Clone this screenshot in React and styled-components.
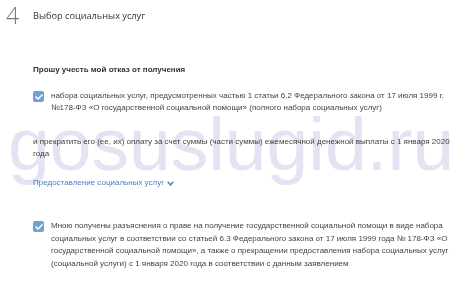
import React from 'react'
import styled, { createGlobalStyle } from 'styled-components'

const Global = createGlobalStyle`
  body {
    margin: 0;
    background: #fff;
    font-family: "Liberation Sans", Arial, sans-serif;
  }
`

const Page = styled.div`
  position: relative;
  width: 474px;
  height: 282px;
  overflow: hidden;
  background: #fff;
`

const Header = styled.div`
  display: flex;
  align-items: center;
  padding: 3px 0 0 6px;
  height: 24px;
`

const StepNumber = styled.span`
  width: 27px;
  font-family: "Open Sans", "Liberation Sans", sans-serif;
  font-weight: 300;
  font-size: 23px;
  line-height: 24px;
  color: #7a7a7a;
`

const Title = styled.h2`
  margin: 0;
  font-family: "Open Sans", "Liberation Sans", sans-serif;
  font-weight: 400;
  font-size: 9.2px;
  color: #333;
  line-height: 12px;
  padding-top: 2px;
`

const Body = styled.div`
  padding: 0 16px 0 33px;
  color: #444;
  font-size: 8px;
  line-height: 12px;
`

const Lead = styled.p`
  margin: 37px 0 0;
  font-weight: 700;
  color: #333;
`

const CheckRow = styled.div`
  display: flex;
  align-items: flex-start;
  margin-top: ${p => p.$gap}px;
  line-height: ${p => p.$lh || 12}px;
`

const Box = styled.span`
  flex: none;
  width: 11px;
  height: 11px;
  margin: 1px 7px 0 0;
  border-radius: 2px;
  background: #6fa2d0;
  display: flex;
  align-items: center;
  justify-content: center;
`

const Paragraph = styled.p`
  margin: ${p => p.$gap}px 0 0;
`

const Link = styled.a`
  display: inline-flex;
  align-items: center;
  gap: 3px;
  margin-top: 17px;
  color: #4a80bf;
  text-decoration: none;
`

const Watermark = styled.div`
  position: absolute;
  left: 8px;
  top: 107px;
  font-family: "Liberation Sans", Arial, sans-serif;
  font-size: 75px;
  line-height: 1;
  color: #e3e3f3;
  mix-blend-mode: multiply;
  pointer-events: none;
  white-space: nowrap;
`

const Check = () => (
  <svg width="8" height="6" viewBox="0 0 8 6">
    <path d="M1 3l2 2 4-4" fill="none" stroke="#fff" strokeWidth="1.6" strokeLinecap="round" strokeLinejoin="round" />
  </svg>
)

const Chevron = () => (
  <svg width="7" height="5" viewBox="0 0 7 5">
    <path d="M0.8 0.8L3.5 4 6.2 0.8" fill="none" stroke="#4a80bf" strokeWidth="1.5" />
  </svg>
)

export default function App() {
  return (
    <Page>
      <Global />
      <Header>
        <StepNumber>4</StepNumber>
        <Title>Выбор социальных услуг</Title>
      </Header>
      <Body>
        <Lead>Прошу учесть мой отказ от получения</Lead>
        <CheckRow $gap={14}>
          <Box><Check /></Box>
          <div>
            набора социальных услуг, предусмотренных частью 1 статьи 6.2 Федерального закона от 17 июля 1999 г.
            №178-ФЗ «О государственной социальной помощи» (полного набора социальных услуг)
          </div>
        </CheckRow>
        <Paragraph $gap={22}>
          и прекратить его (ее, их) оплату за счет суммы (части суммы) ежемесячной денежной выплаты с 1 января 2020 года
        </Paragraph>
        <Link href="#">Предоставление социальных услуг <Chevron /></Link>
        <CheckRow $gap={31} $lh={12.5}>
          <Box><Check /></Box>
          <div>
            Мною получены разъяснения о праве на получение государственной социальной помощи в виде набора
            социальных услуг в соответствии со статьей 6.3 Федерального закона от 17 июля 1999 года № 178-ФЗ «О
            государственной социальной помощи», а также о прекращении предоставления набора социальных услуг
            (социальной услуги) с 1 января 2020 года в соответствии с данным заявлением
          </div>
        </CheckRow>
      </Body>
      <Watermark>gosuslugid.ru</Watermark>
    </Page>
  )
}
